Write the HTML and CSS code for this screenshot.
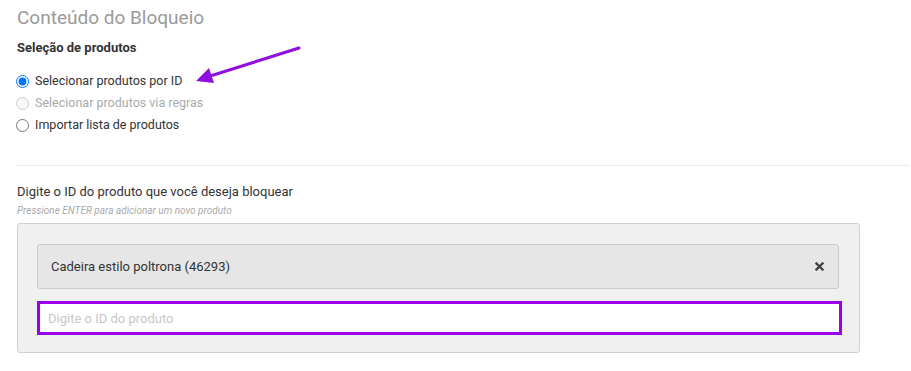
FILE: index.html
```html
<!DOCTYPE html>
<html>
<head>
  <title>Conteúdo do Bloqueio</title>
  <link rel="stylesheet" href="styles.css">
</head>
<body>
  <div class="page">
    <h2 class="title">Conteúdo do Bloqueio</h2>
    <h4 class="group-label">Seleção de produtos</h4>
    <div class="options">
      <label class="option"><input type="radio" name="mode" checked> Selecionar produtos por ID</label>
      <label class="option disabled"><input type="radio" name="mode" disabled> Selecionar produtos via regras</label>
      <label class="option"><input type="radio" name="mode"> Importar lista de produtos</label>
    </div>

    <hr class="divider">

    <div class="field">
      <label class="field-label" for="product-id">Digite o ID do produto que você deseja bloquear</label>
      <p class="hint">Pressione ENTER para adicionar um novo produto</p>
      <div class="product-box">
        <div class="tag">
          <span>Cadeira estilo poltrona (46293)</span>
          <svg class="remove" width="9" height="9" viewBox="0 0 9 9">
            <path d="M1.5 1.5 L7.5 7.5 M7.5 1.5 L1.5 7.5" stroke="#444" stroke-width="2.4" stroke-linecap="square"/>
          </svg>
        </div>
        <input type="text" id="product-id" class="product-input" placeholder="Digite o ID do produto">
      </div>
    </div>

    <!-- annotation arrow -->
    <svg class="arrow" width="911" height="100" viewBox="0 0 911 100">
      <line x1="299" y1="42" x2="207" y2="71" stroke="#8f0fdf" stroke-width="3" stroke-linecap="round"/>
      <polygon points="196,75 209,62 214,77" fill="#8f0fdf"/>
    </svg>
  </div>
</body>
</html>
```

FILE: styles.css
```css
body {
  margin: 0;
  font-family: Roboto, "Liberation Sans", Arial, sans-serif;
  color: #333;
  background: #fff;
}

.page {
  position: relative;
  padding-left: 17px;
}

.title {
  margin: 6px 0 0;
  font-size: 19px;
  line-height: 24px;
  font-weight: 400;
  color: #9a9a9a;
}

.group-label {
  margin: 9px 0 0;
  font-size: 13px;
  line-height: 18px;
  font-weight: 700;
  color: #333;
}

.options {
  margin-top: 13px;
  display: flex;
  flex-direction: column;
}

.option {
  display: flex;
  align-items: center;
  height: 22px;
  font-size: 12.5px;
  line-height: 22px;
  color: #333;
}

.option input {
  margin: 0 6px 0 -1px;
  width: 13px;
  height: 13px;
}

.option.disabled {
  color: #aaa;
}

.divider {
  margin: 29px 1px 0 0;
  border: none;
  border-top: 1px solid #ebebeb;
}

.field {
  margin-top: 17px;
}

.field-label {
  display: block;
  font-size: 13px;
  line-height: 18px;
  color: #333;
}

.hint {
  margin: 3px 0 0;
  font-size: 10px;
  line-height: 14px;
  font-style: italic;
  color: #aaa;
}

.product-box {
  box-sizing: border-box;
  width: 843px;
  margin-top: 5px;
  padding: 20px 20px 17px 19px;
  background: #f0f0f0;
  border: 1px solid #cfcfcf;
  border-radius: 3px;
}

.tag {
  box-sizing: border-box;
  height: 45px;
  padding: 0 14px 0 13px;
  display: flex;
  align-items: center;
  justify-content: space-between;
  background: #e6e6e6;
  border: 1px solid #cccccc;
  border-radius: 3px;
  font-size: 13px;
  color: #333;
}

.product-input {
  box-sizing: border-box;
  display: block;
  width: calc(100% + 3px);
  height: 34px;
  margin-top: 12px;
  padding: 0 8px;
  border: 3px solid #9b00e8;
  background: #fff;
  font-family: inherit;
  font-size: 13px;
  color: #333;
  outline: none;
}

.product-input::placeholder {
  color: #c8c8c8;
}

.arrow {
  position: absolute;
  left: 0;
  top: 0;
  pointer-events: none;
}
```
